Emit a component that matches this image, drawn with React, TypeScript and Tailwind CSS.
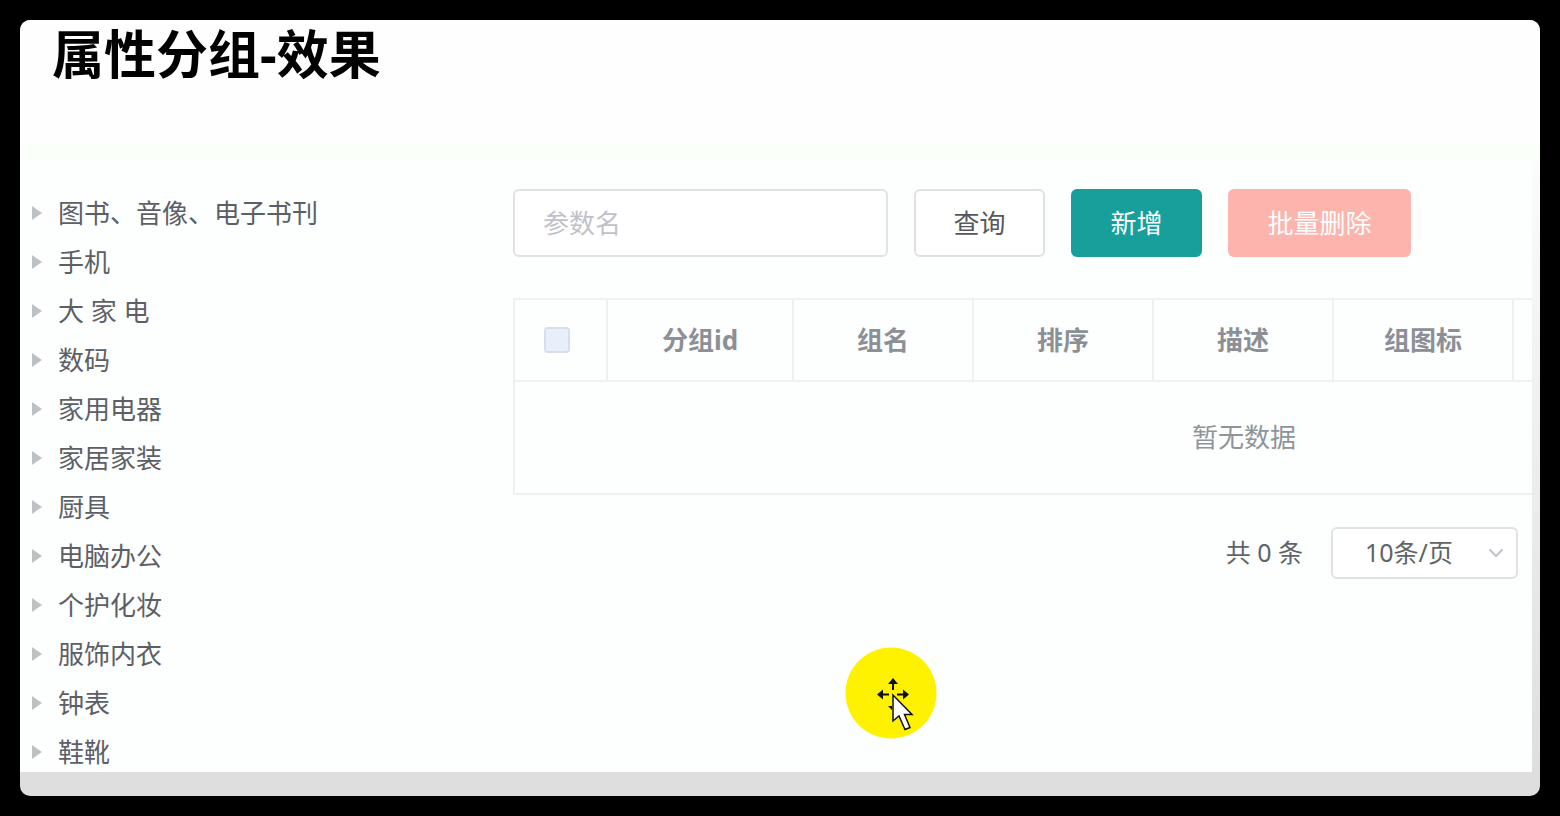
import { ChevronDown } from "lucide-react";

const categories = [
  "图书、音像、电子书刊",
  "手机",
  "大 家 电",
  "数码",
  "家用电器",
  "家居家装",
  "厨具",
  "电脑办公",
  "个护化妆",
  "服饰内衣",
  "钟表",
  "鞋靴",
];

const columns = ["组名", "排序", "描述", "组图标"];

function CategoryTree() {
  return (
    <nav className="w-[493px] shrink-0 pl-3 pt-9">
      <ul className="flex flex-col gap-[15px] pb-[3px]">
        {categories.map((name) => (
          <li key={name}>
            <a href="#" className="flex items-center gap-4 leading-[34px] text-[#5c6066]">
              <svg viewBox="0 0 10 14" className="h-3.5 w-2.5 fill-[#bcc1c4]" aria-hidden="true">
                <path d="M0 0 10 7 0 14Z" />
              </svg>
              {name}
            </a>
          </li>
        ))}
      </ul>
    </nav>
  );
}

function Toolbar() {
  return (
    <form className="flex items-center gap-[26px]">
      <input
        type="text"
        aria-label="参数名"
        placeholder="参数名"
        className="h-[68px] w-[375px] rounded-md border-2 border-[#dfe3e4] bg-white px-7 placeholder:text-[#bfc2c8] focus:outline-none"
      />
      <button type="button" className="h-[68px] w-[131px] rounded-md border-2 border-[#dfe1e4] bg-white text-[#55585d]">
        查询
      </button>
      <button type="button" className="h-[68px] w-[131px] rounded-md bg-[#179f9c] text-white">
        新增
      </button>
      <button type="button" className="h-[68px] w-[183px] rounded-md bg-[#fdb4ac] text-white">
        批量删除
      </button>
    </form>
  );
}

function GroupTable() {
  return (
    <div className="mt-[41px] overflow-hidden">
      <table className="w-[1460px] table-fixed border-separate border-spacing-0 border-l-2 border-t-2 border-[#eef1f2]">
        <colgroup>
          <col className="w-[93px]" />
          <col className="w-[186px]" />
          <col className="w-[180px]" />
          <col className="w-[180px]" />
          <col className="w-[180px]" />
          <col className="w-[180px]" />
          <col />
        </colgroup>
        <thead>
          <tr className="h-[82px] text-[#8c9096]">
            <th className="border-b-2 border-r-2 border-[#eef1f2] pr-2">
              <input
                type="checkbox"
                aria-label="全选"
                className="mx-auto block size-[26px] appearance-none rounded-sm border-2 border-[#d9dfea] bg-[#e9eefb]"
              />
            </th>
            <th className="border-b-2 border-r-2 border-[#eef1f2]">分组id</th>
            {columns.map((title) => (
              <th key={title} className="border-b-2 border-r-2 border-[#eef1f2]">
                {title}
              </th>
            ))}
            <th className="border-b-2 border-[#eef1f2]" />
          </tr>
        </thead>
        <tbody>
          <tr className="h-[113px]">
            <td colSpan={7} className="border-b-2 border-[#eef1f2] text-center text-[#8f949b]">
              暂无数据
            </td>
          </tr>
        </tbody>
      </table>
    </div>
  );
}

function Pagination() {
  return (
    <div className="mt-8 flex items-center justify-end gap-7 pr-3.5 text-[25px] text-[#606469]">
      <span>共 0 条</span>
      <div className="relative">
        <select
          aria-label="每页条数"
          className="h-[52px] w-[187px] appearance-none rounded-md border-2 border-[#dfe3e4] bg-white pl-8 pr-10 focus:outline-none"
        >
          <option>10条/页</option>
        </select>
        <ChevronDown className="pointer-events-none absolute right-2.5 top-3.5 size-6 text-[#bfc4cb]" strokeWidth={2} />
      </div>
    </div>
  );
}

function CursorHighlight() {
  return (
    <svg viewBox="0 0 92 92" className="pointer-events-none absolute left-[845px] top-[647px] size-[92px]" aria-hidden="true">
      <circle cx="46" cy="46" r="45.5" fill="#fff200" />
      <g fill="#111">
        <path d="M48 31 53 37H49V43H47V37H43Z" />
        <path d="M32 47.500 38 42.500V46.500H44V48.500H38V52.500Z" />
        <path d="M64 47.500 58 42.500V46.500H52V48.500H58V52.500Z" />
        <path d="M43 59H47V63Z" />
      </g>
      <path
        d="M48 48V74L54 69 60 82.500 65 80.500 59.500 67.500H67Z"
        fill="#fff"
        stroke="#111"
        strokeWidth="1.500"
        strokeLinejoin="miter"
      />
    </svg>
  );
}

export default function App() {
  return (
    <div className="relative flex min-h-screen flex-col bg-black p-5 font-['Noto_Sans','Noto_Sans_CJK_SC',sans-serif] text-[26px]">
      <div className="flex grow flex-col rounded-[10px] bg-[#dedede]">
        <header className="rounded-t-[10px] bg-[#fefefe] pb-14 pl-8">
          <h1 className="text-[52px] font-bold leading-[68px] text-black">属性分组-效果</h1>
        </header>
        <div className="h-4 bg-[#fafffa]" />
        <div className="flex grow bg-linear-to-b from-[#fafdfa] to-[#dedede]">
          <div className="mr-2 flex min-w-0 grow bg-[#fdfefe]">
            <CategoryTree />
            <main className="min-w-0 grow pt-[29px]">
              <Toolbar />
              <GroupTable />
              <Pagination />
            </main>
          </div>
        </div>
        <div className="h-6" />
      </div>
      <CursorHighlight />
    </div>
  );
}
